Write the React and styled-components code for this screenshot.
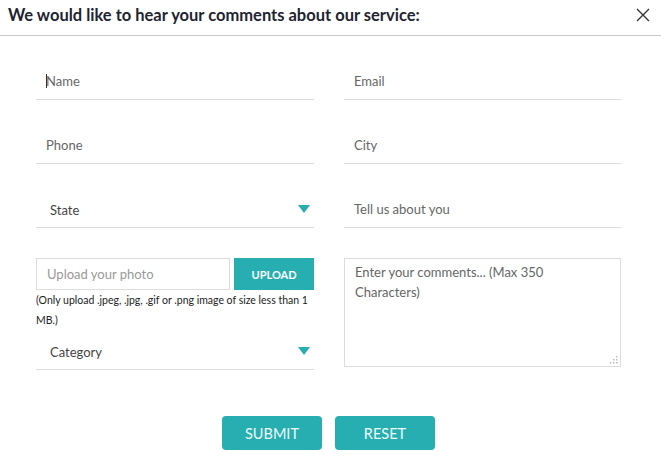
import styled, { createGlobalStyle } from "styled-components";

const GlobalStyle = createGlobalStyle`
  body {
    margin: 0;
    background: #fff;
    font-family: Lato, "Open Sans", sans-serif;
  }
  * { box-sizing: border-box; }
`;

const teal = "#26aeb1";

const App = () => {
  return (
    <>
      <GlobalStyle />
      <Modal>
        <Header>
          <Title>We would like to hear your comments about our service:</Title>
          <Close aria-label="close">
            <svg width="14" height="14" viewBox="0 0 14 14">
              <path d="M1 1 L13 13 M13 1 L1 13" stroke="#333" strokeWidth="1.4" fill="none" />
            </svg>
          </Close>
        </Header>

        <Form>
          <Grid>
            <Field>
              <Caret />
              <Input placeholder="Name" />
            </Field>
            <Field>
              <Input placeholder="Email" />
            </Field>
            <Field>
              <Input placeholder="Phone" />
            </Field>
            <Field>
              <Input placeholder="City" />
            </Field>
            <Field>
              <Select defaultValue="">
                <option value="">State</option>
              </Select>
              <Arrow />
            </Field>
            <Field>
              <Input placeholder="Tell us about you" />
            </Field>
            <Column $top>
              <UploadRow>
                <UploadInput placeholder="Upload your photo" />
                <UploadButton type="button">UPLOAD</UploadButton>
              </UploadRow>
              <Note>
                (Only upload .jpeg, .jpg, .gif or .png image of size less than 1 MB.)
              </Note>
              <Field>
                <Select defaultValue="">
                  <option value="">Category</option>
                </Select>
                <Arrow />
              </Field>
            </Column>
            <Column $top>
              <CommentsWrap>
                <Comments placeholder="Enter your comments... (Max 350 Characters)" />
                <Grip width="8" height="8" viewBox="0 0 8 8">
                  <rect x="6" y="0" width="1.5" height="1.5" fill="#bbb" />
                  <rect x="3" y="3" width="1.5" height="1.5" fill="#bbb" />
                  <rect x="6" y="3" width="1.5" height="1.5" fill="#bbb" />
                  <rect x="0" y="6" width="1.5" height="1.5" fill="#bbb" />
                  <rect x="3" y="6" width="1.5" height="1.5" fill="#bbb" />
                  <rect x="6" y="6" width="1.5" height="1.5" fill="#bbb" />
                </Grip>
              </CommentsWrap>
            </Column>
          </Grid>

          <Actions>
            <ActionButton type="button">SUBMIT</ActionButton>
            <ActionButton type="button">RESET</ActionButton>
          </Actions>
        </Form>
      </Modal>
    </>
  );
};

export default App;

const Modal = styled.div`
  width: 661px;
  height: 456px;
  background: #fff;
`;

const Header = styled.div`
  display: flex;
  align-items: flex-start;
  justify-content: space-between;
  height: 36px;
  padding: 5px 11px 0 8px;
  border-bottom: 1px solid #c8c8c8;
`;

const Title = styled.h3`
  margin: 0;
  font-size: 16.5px;
  line-height: 20px;
  font-weight: 700;
  color: #1e2431;
`;

const Close = styled.button`
  display: flex;
  margin-top: 3px;
  border: none;
  background: none;
  padding: 0;
  cursor: pointer;
`;

const Form = styled.form`
  padding: 26px 40px 0 36px;
`;

const Grid = styled.div`
  display: grid;
  grid-template-columns: 278px 277px;
  column-gap: 30px;
  row-gap: 26px;
`;

const Column = styled.div`
  display: flex;
  flex-direction: column;
  margin-top: ${(p) => (p.$top ? "4px" : "0")};
`;

const Field = styled.div`
  position: relative;
  height: 38px;
  border-bottom: 1px solid #dcdcdc;
`;

const Input = styled.input`
  width: 100%;
  height: 100%;
  border: none;
  outline: none;
  padding: 0 10px;
  font-family: Lato, sans-serif;
  font-size: 13px;
  color: #444;
  background: transparent;

  &::placeholder {
    color: #666;
  }
`;

const Caret = styled.span`
  position: absolute;
  left: 10px;
  top: 12px;
  width: 1px;
  height: 14px;
  background: #333;
`;

const Select = styled.select`
  width: 100%;
  height: 100%;
  border: none;
  outline: none;
  appearance: none;
  background: transparent;
  padding: 2px 30px 0 14px;
  font-family: Lato, sans-serif;
  font-size: 13px;
  color: #444;
`;

const Arrow = styled.span`
  position: absolute;
  right: 4px;
  top: 15px;
  width: 0;
  height: 0;
  border-left: 6px solid transparent;
  border-right: 6px solid transparent;
  border-top: 8px solid ${teal};
  pointer-events: none;
`;

const UploadRow = styled.div`
  display: flex;
  gap: 4px;
  height: 32px;
`;

const UploadInput = styled.input`
  width: 194px;
  height: 32px;
  border: 1px solid #dcdcdc;
  outline: none;
  padding: 0 10px;
  font-family: Lato, sans-serif;
  font-size: 13px;

  &::placeholder {
    color: #999;
  }
`;

const UploadButton = styled.button`
  width: 80px;
  height: 32px;
  border: none;
  background: ${teal};
  color: #fff;
  font-family: Lato, sans-serif;
  font-weight: 700;
  font-size: 11px;
  cursor: pointer;
`;

const Note = styled.p`
  margin: 0 0 2px;
  font-size: 10.5px;
  line-height: 20px;
  color: #222;
`;

const CommentsWrap = styled.div`
  position: relative;
  width: 277px;
  height: 109px;
`;

const Comments = styled.textarea`
  display: block;
  width: 100%;
  height: 100%;
  border: 1px solid #dcdcdc;
  outline: none;
  resize: none;
  padding: 3px 10px;
  font-family: Lato, sans-serif;
  font-size: 13px;
  line-height: 20px;
  color: #444;

  &::placeholder {
    color: #666;
  }
`;

const Grip = styled.svg`
  position: absolute;
  right: 3px;
  bottom: 3px;
  pointer-events: none;
`;

const Actions = styled.div`
  display: flex;
  justify-content: center;
  gap: 13px;
  margin-top: 46px;
`;

const ActionButton = styled.button`
  width: 100px;
  height: 34px;
  border: none;
  border-radius: 4px;
  background: ${teal};
  color: #eefafa;
  font-family: Lato, sans-serif;
  font-size: 14.5px;
  cursor: pointer;
`;
